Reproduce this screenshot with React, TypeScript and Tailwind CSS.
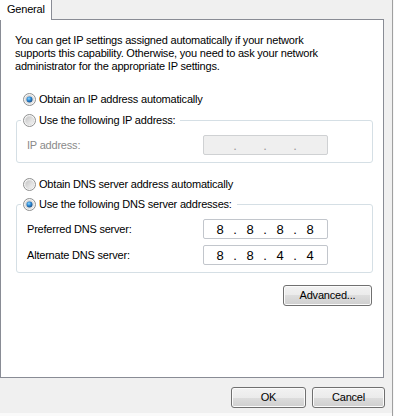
import React from 'react';

const Radio: React.FC<{ id: string; checked?: boolean }> = ({ id, checked }) => (
  <svg width="13" height="13" viewBox="0 0 13 13" className="shrink-0">
    <defs>
      <linearGradient id={`rg-${id}`} x1="0" y1="0" x2="1" y2="1">
        <stop offset="0" stopColor="#c4c4c4" />
        <stop offset="1" stopColor="#f6f6f6" />
      </linearGradient>
      <radialGradient id={`rd-${id}`} cx="0.4" cy="0.35" r="0.75">
        <stop offset="0" stopColor="#8fd8ff" />
        <stop offset="0.45" stopColor="#2c88d4" />
        <stop offset="1" stopColor="#123f70" />
      </radialGradient>
    </defs>
    <circle cx="6.5" cy="6.5" r="6" fill="#f6f6f6" stroke="#8e8f8f" />
    <circle cx="6.5" cy="6.5" r="4.2" fill={`url(#rg-${id})`} stroke="#dcdcdc" strokeWidth="0.8" />
    {checked && <circle cx="6.5" cy="6.5" r="3" fill={`url(#rd-${id})`} />}
  </svg>
);

const RadioRow: React.FC<{ id: string; checked?: boolean; label: string }> = ({ id, checked, label }) => (
  <div className="flex h-[13px] items-center gap-[3px] whitespace-nowrap">
    <Radio id={id} checked={checked} />
    <span>{label}</span>
  </div>
);

const IpBox: React.FC<{ parts: string[]; disabled?: boolean }> = ({ parts, disabled }) => (
  <div
    className={`flex h-[20px] w-[125px] items-center rounded-[2px] border pl-[3px] text-[13px] ${
      disabled ? 'border-[#cfd1d3] bg-[#efefef] text-[#9a9a9a]' : 'border-[#c2c6cc] bg-white text-black'
    }`}
  >
    {parts.map((p, i) => (
      <React.Fragment key={i}>
        {i > 0 && <span className="w-[4px] text-center">.</span>}
        <span className="w-[26px] text-center">{p}</span>
      </React.Fragment>
    ))}
  </div>
);

const Field: React.FC<{ label: string; parts: string[]; disabled?: boolean }> = ({ label, parts, disabled }) => (
  <div className="flex items-center pl-[10px]">
    <span className={`w-[176px] whitespace-nowrap ${disabled ? 'text-[#8a8a8a]' : 'text-black'}`}>{label}</span>
    <IpBox parts={parts} disabled={disabled} />
  </div>
);

const Button: React.FC<{ label: string; className?: string }> = ({ label, className }) => (
  <button
    className={`flex h-[21px] items-center justify-center rounded-[3px] border border-[#707070] bg-[linear-gradient(to_bottom,#f2f2f2_0%,#ebebeb_50%,#dddddd_50%,#cfcfcf_100%)] text-black shadow-[inset_0_0_0_1px_#fbfbfb] ${className ?? ''}`}
  >
    {label}
  </button>
);

const Group: React.FC<{ id: string; checked?: boolean; label: string; children: React.ReactNode }> = ({
  id,
  checked,
  label,
  children,
}) => (
  <fieldset className="w-[357px] rounded-[3px] border border-[#d5dfe5]">
    <legend className="ml-[4px] pl-[2px] pr-[5px]">
      <RadioRow id={id} checked={checked} label={label} />
    </legend>
    <div className="flex flex-col gap-[6px] pt-[8px] pb-[7px]">{children}</div>
  </fieldset>
);

export default function App() {
  return (
    <div className="flex h-[416px] w-[394px] bg-[#f0f0f0] font-['Liberation_Sans',Arial,sans-serif] text-[11px] leading-[13px] tracking-[-0.2px] text-black">
      <div className="flex w-[392px] flex-col">
        <div className="flex h-[20px] w-[384px]">
          <div className="w-[52px] border-r border-[#898c95] bg-white pl-[7px] pt-[3px]">General</div>
          <div className="flex-1 border-b border-[#898c95]" />
        </div>

        <div className="flex h-[358px] w-[384px] flex-col border-x border-b border-[#898c95] bg-white pl-[15px] pt-[14px]">
          <p className="-ml-px whitespace-nowrap">
            You can get IP settings assigned automatically if your network
            <br />
            supports this capability. Otherwise, you need to ask your network
            <br />
            administrator for the appropriate IP settings.
          </p>

          <div className="mt-[20px] pl-[7px]">
            <RadioRow id="r1" checked label="Obtain an IP address automatically" />
          </div>

          <div className="mt-[8px]">
            <Group id="r2" label="Use the following IP address:">
              <Field label="IP address:" parts={['', '', '', '']} disabled />
            </Group>
          </div>

          <div className="mt-[15px] pl-[7px]">
            <RadioRow id="r3" label="Obtain DNS server address automatically" />
          </div>

          <div className="mt-[7px]">
            <Group id="r4" checked label="Use the following DNS server addresses:">
              <Field label="Preferred DNS server:" parts={['8', '8', '8', '8']} />
              <Field label="Alternate DNS server:" parts={['8', '8', '4', '4']} />
            </Group>
          </div>

          <div className="mt-[12px] flex w-[356px] justify-end">
            <Button label="Advanced..." className="w-[89px]" />
          </div>
        </div>

        <div className="flex h-[35px] justify-end gap-[6px] pr-[7px] pt-[9px]">
          <Button label="OK" className="w-[75px]" />
          <Button label="Cancel" className="w-[73px]" />
        </div>
        <div className="h-[3px] bg-[#fafafa]" />
      </div>
      <div className="w-px bg-[#a0a0a0]" />
      <div className="w-px bg-[#f7f7f7]" />
    </div>
  );
}
